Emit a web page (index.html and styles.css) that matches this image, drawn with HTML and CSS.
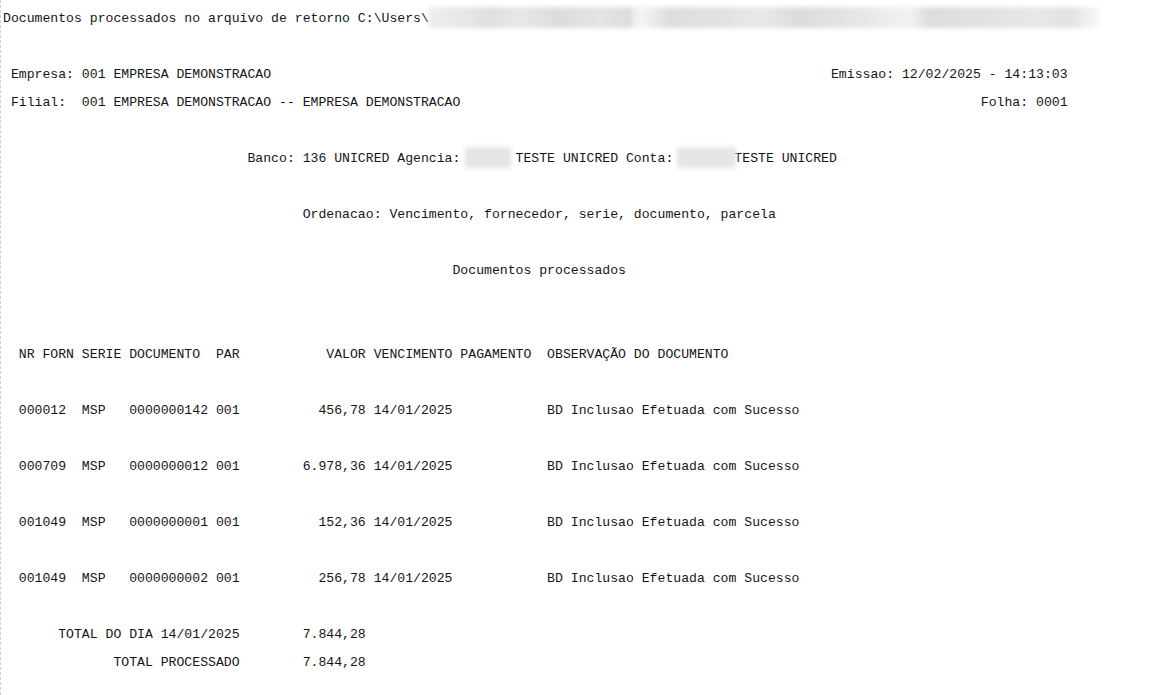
FILE: index.html
```html
<!DOCTYPE html>
<html lang="pt-BR">
  <head>
    <meta charset="utf-8">
    <title>Documentos processados</title>
    <link rel="stylesheet" href="styles.css">
  </head>
  <body>
    <div class="page">
      <div class="report">
        <div class="line">Documentos processados no arquivo de retorno C:\Users\<span class="blur path"></span></div>
        <div class="line"></div>
        <div class="line split">
          <span> Empresa: 001 EMPRESA DEMONSTRACAO</span>
          <span>Emissao: 12/02/2025 - 14:13:03</span>
        </div>
        <div class="line split">
          <span> Filial:  001 EMPRESA DEMONSTRACAO -- EMPRESA DEMONSTRACAO</span>
          <span>Folha: 0001</span>
        </div>
        <div class="line"></div>
        <div class="line">                               Banco: 136 UNICRED Agencia:<span class="blur agencia"></span>TESTE UNICRED Conta:<span class="blur conta"></span>TESTE UNICRED</div>
        <div class="line"></div>
        <div class="line">                                      Ordenacao: Vencimento, fornecedor, serie, documento, parcela</div>
        <div class="line"></div>
        <div class="line">                                                         Documentos processados</div>
        <div class="line"></div>
        <div class="line"></div>
        <div class="line">  NR FORN SERIE DOCUMENTO  PAR           VALOR VENCIMENTO PAGAMENTO  OBSERVAÇÃO DO DOCUMENTO</div>
        <div class="line"></div>
        <div class="line">  000012  MSP   0000000142 001          456,78 14/01/2025            BD Inclusao Efetuada com Sucesso</div>
        <div class="line"></div>
        <div class="line">  000709  MSP   0000000012 001        6.978,36 14/01/2025            BD Inclusao Efetuada com Sucesso</div>
        <div class="line"></div>
        <div class="line">  001049  MSP   0000000001 001          152,36 14/01/2025            BD Inclusao Efetuada com Sucesso</div>
        <div class="line"></div>
        <div class="line">  001049  MSP   0000000002 001          256,78 14/01/2025            BD Inclusao Efetuada com Sucesso</div>
        <div class="line"></div>
        <div class="line">       TOTAL DO DIA 14/01/2025        7.844,28</div>
        <div class="line">              TOTAL PROCESSADO        7.844,28</div>
      </div>
    </div>
  </body>
</html>
```

FILE: styles.css
```css
html {
  background: #ffffff;
}

body {
  margin: 0;
}

.page {
  min-height: 100vh;
  box-sizing: border-box;
  border-left: 1px dashed #cfcfcf;
  padding: 5px 0 0 2px;
}

.report {
  width: 135ch;
  font-family: "Liberation Mono", "Courier New", monospace;
  font-size: 13.15px;
  color: #151515;
}

.line {
  height: 28px;
  line-height: 28px;
  white-space: pre;
}

.split {
  display: flex;
  justify-content: space-between;
}

/* redacted values */
.blur {
  display: inline-block;
  height: 21px;
  vertical-align: -6px;
  filter: blur(2px);
}

.path {
  width: 670px;
  margin-top: -2px;
  background: linear-gradient(90deg,
    #ededed 0px, #e6e6e6 40px, #dedede 60px, #e8e8e8 90px,
    #dcdcdc 130px, #e4e4e4 170px, #dddddd 200px, #f3f3f3 208px,
    #f3f3f3 215px, #dedede 240px, #e2e2e2 300px, #e9e9e9 330px,
    #dcdcdc 370px, #e4e4e4 420px, #f2f2f2 480px, #dddddd 500px,
    #e2e2e2 560px, #e8e8e8 610px, #e2e2e2 640px, #f8f8f8 670px);
}

.agencia {
  width: 7ch;
  box-sizing: border-box;
  padding: 0 5px;
  background: #e4e4e4;
  background-clip: content-box;
}

.conta {
  width: 8ch;
  box-sizing: border-box;
  padding-left: 4px;
  margin-right: -2px;
  background: #e6e6e6;
  background-clip: content-box;
}
```
